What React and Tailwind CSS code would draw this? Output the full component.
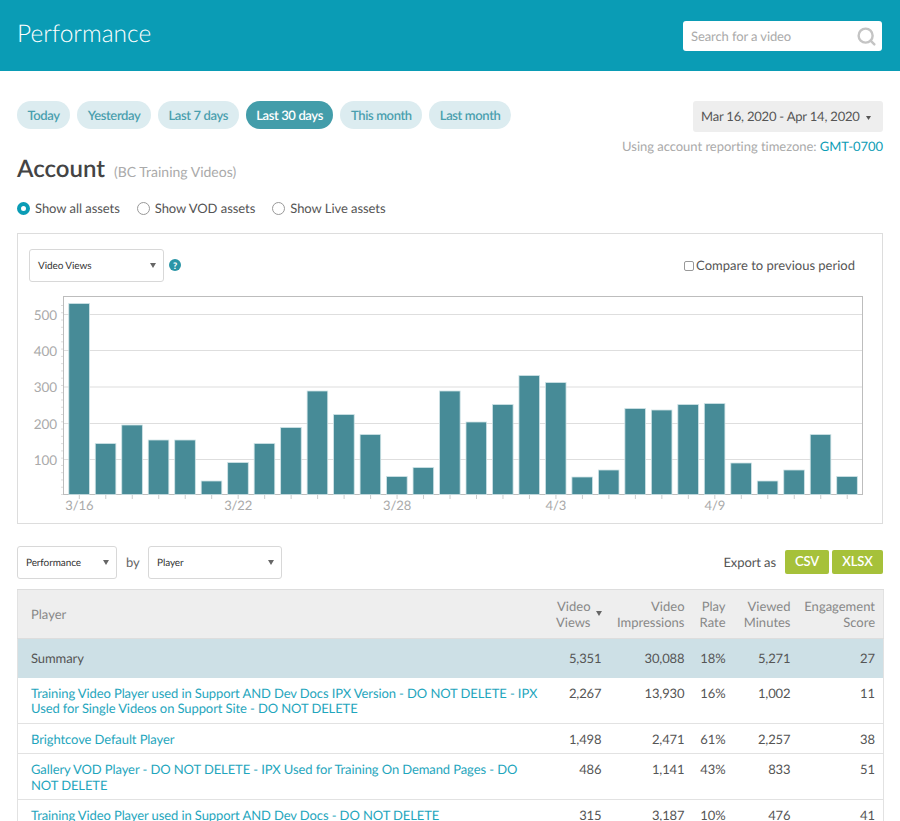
import { Search } from "lucide-react";

const pills = ["Today", "Yesterday", "Last 7 days", "Last 30 days", "This month", "Last month"];

// bar tops in px, measured off the plot (baseline is 494.5)
const barTops = [
  303.5, 443.5, 425, 440, 440, 481, 462.5, 443.5, 427.5, 391, 414.5, 434.5, 476.5, 467.5, 391,
  422, 404.5, 375.5, 382.5, 477, 470, 408.5, 410, 404.5, 403.5, 463, 481, 470, 434.5, 476.5,
];

const gridLines = [
  { y: 314.5, label: "500" },
  { y: 350.5, label: "400" },
  { y: 387, label: "300" },
  { y: 423.5, label: "200" },
  { y: 459.5, label: "100" },
];

const dateLabels = [
  { i: 0, label: "3/16" },
  { i: 6, label: "3/22" },
  { i: 12, label: "3/28" },
  { i: 18, label: "4/3" },
  { i: 24, label: "4/9" },
];

const rows = [
  {
    name: "Training Video Player used in Support AND Dev Docs IPX Version - DO NOT DELETE - IPX Used for Single Videos on Support Site - DO NOT DELETE",
    cells: ["2,267", "13,930", "16%", "1,002", "11"],
  },
  { name: "Brightcove Default Player", cells: ["1,498", "2,471", "61%", "2,257", "38"] },
  {
    name: "Gallery VOD Player - DO NOT DELETE - IPX Used for Training On Demand Pages - DO NOT DELETE",
    cells: ["486", "1,141", "43%", "833", "51"],
  },
  {
    name: "Training Video Player used in Support AND Dev Docs - DO NOT DELETE",
    cells: ["315", "3,187", "10%", "476", "41"],
  },
];

function Caret({ className }) {
  return (
    <svg viewBox="0 0 10 8" className={className}>
      <path d="M0 0h10L5 8z" fill="currentColor" />
    </svg>
  );
}

function Select({ label, className }) {
  return (
    <div
      className={`flex h-[33px] items-center justify-between rounded-[3px] border border-[#d8d8d8] bg-white pl-[8px] pr-[7px] text-[10px] text-[#333] ${className}`}
    >
      <span className="pt-[2px]">{label}</span>
      <Caret className="h-[5px] w-[6px] text-[#666]" />
    </div>
  );
}

function Radio({ label, checked }) {
  return (
    <label className="flex items-center gap-[5px]">
      {checked ? (
        <span className="h-[13px] w-[13px] rounded-full border-[4px] border-[#0a9cb5] bg-white" />
      ) : (
        <span className="h-[13px] w-[13px] rounded-full border border-[#999] bg-white" />
      )}
      <span className="pt-[1px] tracking-[-0.05px]">{label}</span>
    </label>
  );
}

function Chart() {
  return (
    <svg width="864" height="233" viewBox="18 290 864 233" className="block" fontFamily="Lato, sans-serif">
      {gridLines.map((g) => (
        <line key={g.y} x1="63" x2="862" y1={g.y} y2={g.y} stroke="#dedede" strokeWidth="1.2" />
      ))}
      <rect x="63.5" y="296.5" width="799" height="198" fill="none" stroke="#bdbdbd" />
      {/* minor ticks on the y axis */}
      {Array.from({ length: 27 }, (_, i) => (
        <line key={i} x1="61" x2="63" y1={494.5 - i * 7.27} y2={494.5 - i * 7.27} stroke="#ddd" />
      ))}
      {gridLines.map((g) => (
        <text key={g.label} x="57" y={g.y + 5} textAnchor="end" fontSize="13.5" fill="#aaa">
          {g.label}
        </text>
      ))}
      {barTops.map((top, i) => {
        const x = 68.8 + i * 26.48;
        return (
          <g key={i}>
            <line x1={x + 10.5} x2={x + 10.5} y1="495" y2="499" stroke="#ccc" />
            <rect x={x} y={top} width="20.6" height={494.5 - top} fill="#478b97" stroke="#cfe3e6" strokeWidth="0.8" />
          </g>
        );
      })}
      {dateLabels.map((d) => (
        <text key={d.label} x={79.3 + d.i * 26.48} y="510" textAnchor="middle" fontSize="13" fill="#aaa">
          {d.label}
        </text>
      ))}
    </svg>
  );
}

export default function App() {
  return (
    <div className="h-[821px] overflow-hidden bg-white font-['Lato',sans-serif] text-[13px] tracking-[-0.1px] text-[#555] [text-rendering:geometricPrecision]">
      <header className="flex h-[71px] items-center justify-between bg-[#0a9cb5] pl-[17px] pr-[18px]">
        <h1 className="mt-[-3px] text-[24.5px] font-light tracking-normal text-white">Performance</h1>
        <div className="mt-[1px] flex h-[30px] w-[199px] items-center justify-between rounded-[3px] bg-white pl-2 pr-[5px] text-[#aaa]">
          <span className="pt-[2px]">Search for a video</span>
          <Search className="h-[21px] w-[21px] text-[#c4c4c4]" strokeWidth={2.75} />
        </div>
      </header>

      <main className="px-[17px] pt-[30px]">
        <div className="flex items-start justify-between">
          <div className="flex gap-[7px]">
            {pills.map((p) =>
              p === "Last 30 days" ? (
                <span key={p} className="flex h-[28px] items-center rounded-full bg-[#439daa] px-[10.5px] pt-[2px] font-semibold tracking-[-0.37px] text-white">
                  {p}
                </span>
              ) : (
                <span key={p} className="flex h-[28px] items-center rounded-full bg-[#dcecf0] px-[10.5px] pt-[2px] font-semibold tracking-[-0.37px] text-[#4a9fae]">
                  {p}
                </span>
              ),
            )}
          </div>
          <div className="flex flex-col items-end">
            <div className="flex h-[31px] w-[190px] items-center gap-[6px] whitespace-nowrap rounded-[3px] bg-[#eee] pl-[8px] tracking-[-0.2px] text-[#555]">
              <span className="pt-[1px]">Mar 16, 2020 - Apr 14, 2020</span>
              <Caret className="mt-[3px] h-[4px] w-[5px] text-[#555]" />
            </div>
            <p className="mt-[6px] leading-[17px] tracking-[-0.03px] text-[#aaa]">
              Using account reporting timezone: <a className="text-[#0a9cb5]">GMT-0700</a>
            </p>
          </div>
        </div>

        <div className="mt-[-1px] flex items-baseline gap-[9px]">
          <h2 className="text-[24px] font-semibold leading-[30px] tracking-normal text-[#444]">Account</h2>
          <span className="text-[14px] tracking-normal text-[#aaa]">(BC Training Videos)</span>
        </div>

        <div className="mt-[14px] flex h-[20px] items-center gap-[17px]">
          <Radio label="Show all assets" checked />
          <Radio label="Show VOD assets" />
          <Radio label="Show Live assets" />
        </div>

        <section className="mt-[15px] h-[291px] border border-[#ddd] pt-[15px]">
          <div className="flex items-start justify-between pl-[11px] pr-[27px]">
            <div className="flex items-start gap-[5px]">
              <Select label="Video Views" className="w-[135px]" />
              <span className="mt-[10px] flex h-[12px] w-[12px] items-center justify-center rounded-full bg-[#2a95a6] text-[9px] font-black leading-none text-white">
                ?
              </span>
            </div>
            <label className="mt-[7px] flex items-center gap-[2px] tracking-normal">
              <span className="h-[10px] w-[10px] rounded-[2px] border border-[#999] bg-white" />
              <span>Compare to previous period</span>
            </label>
          </div>
          <div className="mt-[8px]">
            <Chart />
          </div>
        </section>

        <div className="mt-[22px] flex items-center justify-between">
          <div className="flex items-center gap-[9px]">
            <Select label="Performance" className="w-[100px]" />
            <span className="w-[13px] text-[#666]">by</span>
            <Select label="Player" className="w-[134px]" />
          </div>
          <div className="mb-[2px] flex items-center">
            <span className="mr-[9px] pt-[2px]">Export as</span>
            <button className="flex h-[24px] w-[44px] items-center justify-center rounded-[2px] bg-[#a6c13a] font-semibold text-white">
              CSV
            </button>
            <button className="ml-[3px] flex h-[24px] w-[51px] items-center justify-center rounded-[2px] bg-[#a6c13a] font-semibold text-white">
              XLSX
            </button>
          </div>
        </div>

        <table className="mt-[10px] w-[866px] table-fixed border-collapse border-x border-[#e2e2e2] leading-[15.6px]">
          <colgroup>
            <col className="w-[530px]" />
            <col className="w-[62px]" />
            <col className="w-[83px]" />
            <col className="w-[41px]" />
            <col className="w-[65px]" />
            <col className="w-[85px]" />
          </colgroup>
          <thead>
            <tr className="h-[49px] border-y border-[#ddd] bg-[#eee] tracking-normal text-[#888]">
              <th className="pl-[13px] pt-[2px] text-left font-normal">Player</th>
              <th className="pr-[8px] pt-[2px] text-right font-normal">
                <span className="relative inline-block pr-[11px]">
                  Video
                  <br />
                  Views
                  <Caret className="absolute right-0 top-[12px] h-[5px] w-[6px] text-[#666]" />
                </span>
              </th>
              <th className="pr-[8px] pt-[2px] text-right font-normal">
                Video
                <br />
                Impressions
              </th>
              <th className="pr-[8px] pt-[2px] text-right font-normal">
                Play
                <br />
                Rate
              </th>
              <th className="pr-[8px] pt-[2px] text-right font-normal">
                Viewed
                <br />
                Minutes
              </th>
              <th className="pr-[8px] pt-[2px] text-right font-normal">
                Engagement
                <br />
                Score
              </th>
            </tr>
          </thead>
          <tbody>
            <tr className="h-[39px] bg-[#cde0e6]">
              <td className="pl-[13px] pt-[2px]">Summary</td>
              {["5,351", "30,088", "18%", "5,271", "27"].map((v) => (
                <td key={v} className="pr-[8px] pt-[2px] text-right">
                  {v}
                </td>
              ))}
            </tr>
            {rows.map((r) => (
              <tr key={r.name} className="border-b border-[#e2e2e2] align-top">
                <td className="pb-[6px] pl-[13px] pr-[4px] pt-[8px]">
                  <a className="text-[#1fa6bd]">{r.name}</a>
                </td>
                {r.cells.map((c, i) => (
                  <td key={i} className="pb-[6px] pr-[8px] pt-[8px] text-right">
                    {c}
                  </td>
                ))}
              </tr>
            ))}
          </tbody>
        </table>
      </main>
    </div>
  );
}
